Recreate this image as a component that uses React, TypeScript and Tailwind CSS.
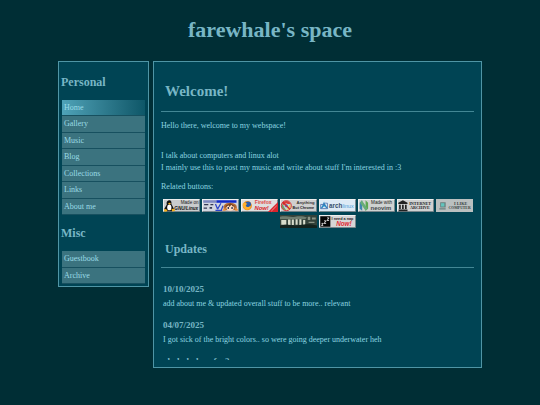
import type { ReactNode } from "react";

const personalLinks = ["Home", "Gallery", "Music", "Blog", "Collections", "Links", "About me"];
const miscLinks = ["Guestbook", "Archive"];

const updates = [
  { title: "10/10/2025", text: "add about me & updated overall stuff to be more.. relevant" },
  { title: "04/07/2025", text: "I got sick of the bright colors.. so were going deeper underwater heh" },
];

const NavGroup = ({ title, links, height }: { title: string; links: string[]; height: string }) => {
  return (
    <div>
      <h2 className="py-[11px] text-[12px] leading-[14px] font-bold">{title}</h2>
      <ul className={`grid auto-rows-fr px-px ${height}`}>
        {links.map((link) => (
          <li key={link} className="flex border-b border-[#17505f]">
            <a
              href="#"
              className={`flex-1 px-[2px] text-[8px] leading-[15px] text-[#9adbe6] ${
                link === "Home" ? "bg-linear-to-r from-[#4fa3b8] to-[#0d5768]" : "bg-[#3b737f]"
              }`}
            >
              {link}
            </a>
          </li>
        ))}
      </ul>
    </div>
  );
};

const Badge = ({ label, children }: { label: string; children: ReactNode }) => {
  return (
    <a href="#" aria-label={label} className="block h-[13px] w-[37px]">
      <svg viewBox="0 0 88 31" preserveAspectRatio="none" className="block h-full w-full font-['Liberation_Sans'] font-bold">
        {children}
      </svg>
    </a>
  );
};

const Frame = ({ fill }: { fill: string }) => (
  <>
    <rect width="88" height="31" fill="#f2f2f2" />
    <path d="M88 0V31H0L3 28H85V3Z" fill="#66777c" />
    <rect x="2" y="2" width="84" height="27" fill={fill} />
  </>
);

const Badges = () => {
  return (
    <div className="flex flex-wrap justify-center gap-x-[2px] gap-y-[3px]">
      <Badge label="Made on GNU/Linux">
        <Frame fill="#c9cccc" />
        <path d="M12 4c6-3 9 2 8 8l6 11-4 6H7l-4-5 6-11c-1-5 0-8 3-9Z" fill="#111" />
        <ellipse cx="15" cy="20" rx="5" ry="7" fill="#fff" />
        <path d="m12 10 4-1 3 2-4 3Z" fill="#f5b21b" />
        <path d="m4 23 7 3-2 4H2Zm16 1 6-1 3 5-7 2Z" fill="#f5b21b" />
        <text x="42" y="13" fontSize="11" fill="#222" fontWeight="400">Made on</text>
        <text x="27" y="26" fontSize="11" fontStyle="italic" fill="#111">GNU/Linux</text>
      </Badge>
      <Badge label="Anime button">
        <Frame fill="#d2d5df" />
        <rect x="34" y="3" width="48" height="6" fill="#1029c8" />
        <rect x="3" y="3" width="31" height="6" fill="#7e88c0" />
        <path d="M5 12h10v3H5zm15 0h7v3h-7zM4 20h8v3H4zm14-1h6v4h-6z" fill="#343954" />
        <path d="m32 12 5 12m8-14-8 14m13-8-4 10m-14 1h16" stroke="#2d45c8" strokeWidth="3" />
        <path d="M53 27c-5-10 0-18 14-18s19 9 14 18Z" fill="#b46b36" />
        <ellipse cx="67" cy="21" rx="9" ry="7" fill="#ffdec4" />
        <path d="m56 16 11-6 12 7-6 1-3-4-5 5-2-4-7 5Z" fill="#73401f" />
        <path d="M61 19h3v5h-3zm9 0h3v5h-3z" fill="#20294c" />
        <path d="m50 25 6-4v7h-7Zm29-4 6 3v4h-6Z" fill="#eb8e3a" />
      </Badge>
      <Badge label="Firefox Now!">
        <Frame fill="#dedede" />
        <circle cx="15" cy="16" r="11" fill="#ed8e20" />
        <circle cx="17" cy="13" r="7" fill="#285cae" />
        <path d="M5 11c4-4 6 0 10 0l-4 5c3 5 8 4 13-1-1 14-20 15-20-4Z" fill="#ffb02c" />
        <path d="m64 31 24-24v24Z" fill="#d8252d" />
        <path d="m72 29 13-13" stroke="#f3a0a0" strokeWidth="2" />
        <text x="33" y="13" fontSize="12" fill="#df4848">Firefox</text>
        <text x="32" y="27" fontSize="14" fontStyle="italic" fill="#d9212b">Now!</text>
      </Badge>
      <Badge label="Anything But Chrome">
        <Frame fill="#cfcfcf" />
        <path d="M15 5a11 11 0 0 1 10 7H14l-3 6-6-8c2-3 6-5 10-5Z" fill="#d93f39" />
        <path d="m5 11 7 12 3 4C4 27 2 17 5 11Z" fill="#6d9b66" />
        <path d="M25 12c2 8-2 14-10 15l6-12Z" fill="#e8cf6a" />
        <circle cx="15" cy="16" r="5" fill="#e9e9e9" />
        <circle cx="15" cy="16" r="4" fill="#577fba" />
        <circle cx="15" cy="16" r="12" fill="none" stroke="#d42028" strokeWidth="2" />
        <path d="m7 8 16 16" stroke="#d42028" strokeWidth="3" />
        <text x="39" y="13" fontSize="10" fill="#333">Anything</text>
        <text x="30" y="25" fontSize="9" fill="#222">But Chrome</text>
      </Badge>
      <Badge label="Arch Linux">
        <Frame fill="#dceaf5" />
        <path d="M12 6c2 6 6 12 10 17l-6-2c-1-4-6-4-7 0l-6 3C7 18 10 12 12 6Z" fill="#2688c4" />
        <path d="M4 13h8l3-3h5v13H4Z" fill="none" stroke="#4b6fae" strokeWidth="2" />
        <text x="24" y="21" fontSize="15" fill="#354d69">arch</text>
        <text x="56" y="21" fontSize="13" fill="#4aa0d8" fontWeight="400">linux</text>
      </Badge>
      <Badge label="Made with Neovim">
        <Frame fill="#cfd2d1" />
        <path d="m4 9 6-6v25l-6-5Z" fill="#3f86b0" />
        <path d="m18 3 6 6v14l-6 5Z" fill="#5da851" />
        <path d="m9 3 14 20-5 5L5 9Z" fill="#67ad78" />
        <text x="31" y="12" fontSize="11" fill="#222" fontWeight="400">Made with</text>
        <text x="30" y="26" fontSize="14" fill="#42484b">neovim</text>
      </Badge>
      <Badge label="Internet Archive">
        <Frame fill="#cfd1d1" />
        <path d="M3 9 14 3l11 6v3H3Zm1 16h21v4H4Zm1-11h4v10H5Zm7 0h4v10h-4Zm7 0h4v10h-4Z" fill="#222" />
        <text x="29" y="14" fontSize="10" fill="#222" className="font-['Liberation_Serif']">INTERNET</text>
        <text x="31" y="25" fontSize="10" fill="#222" className="font-['Liberation_Serif']">ARCHIVE</text>
      </Badge>
      <Badge label="I like computer">
        <rect width="88" height="31" fill="#bac0c0" />
        <path d="M10 8h13v12H10Zm-2 14h15v3H8Z" fill="#687f7d" />
        <path d="M12 10h8v8h-8Z" fill="#62c5bd" />
        <text x="43" y="14" fontSize="10" fill="#364040" className="font-['Liberation_Serif']">I LIKE</text>
        <text x="30" y="25" fontSize="9" fill="#364040" className="font-['Liberation_Serif']">COMPUTER</text>
      </Badge>
      <Badge label="Landscape">
        <rect width="88" height="31" fill="#33423a" />
        <path d="M0 4c14-3 24 2 36 0s20-1 28 2l-4 4H0Z" fill="#6f7d70" />
        <path d="M3 12h12v11H3Zm16-1h6v13h-6Zm9 0h5v13h-5Zm9-1h5v13h-5Zm9 0h5v14h-5Zm9 2h5v12h-5Z" fill="#d8dccb" />
        <path d="M66 4h6v8h-6Zm10 2h9v5h-9Zm-8 10h14v3H68Z" fill="#8b9587" />
        <path d="M0 25c18-5 29 2 46-1s26-3 42 1v6H0Z" fill="#14231e" />
      </Badge>
      <Badge label="I need a nap Now!">
        <Frame fill="#d6d6d6" />
        <rect x="3" y="3" width="24" height="25" fill="#050505" />
        <path d="M6 20h4l-4 5h4m2-11h5l-5 6h5m2-13h5l-5 6h5" fill="none" stroke="#eee" strokeWidth="2" />
        <text x="30" y="12" fontSize="9" fill="#222">I need a nap</text>
        <text x="41" y="26" fontSize="15" fontStyle="italic" fill="#e12b32">Now!</text>
      </Badge>
    </div>
  );
};

export default function App() {
  return (
    <div className="min-h-screen bg-[#002e35] px-4 pb-9 font-['Liberation_Serif',serif] text-[#78b6c5]">
      <header className="pt-4 pb-[17px] text-center">
        <h1 className="text-[22px] leading-7 font-bold">farewhale's space</h1>
      </header>
      <div className="mx-auto flex w-full max-w-[424px] items-start gap-1">
        <nav className="w-[91px] shrink-0 border border-[#4f95a5] bg-[#004454] p-[2px]">
          <NavGroup title="Personal" links={personalLinks} height="h-[115px]" />
          <NavGroup title="Misc" links={miscLinks} height="h-[33px]" />
        </nav>
        <main className="min-w-0 flex-1 border border-[#4f95a5] bg-[#004454] px-[7px] pb-[7px]">
          <h2 className="border-b border-[#438795] px-1 pt-5 pb-[11px] text-[15px] leading-[18px] font-bold">Welcome!</h2>
          <div className="pt-2 text-[8px] leading-[12px] text-[#8bd5e0]">
            <p>Hello there, welcome to my webspace!</p>
            <p className="pt-[18px]">
              I talk about computers and linux alot
              <br />
              I mainly use this to post my music and write about stuff I'm interested in :3
            </p>
            <p className="pt-[7px] pb-[6px]">Related buttons:</p>
          </div>
          <Badges />
          <h2 className="border-b border-[#438795] px-1 pt-[14px] pb-[11px] text-[12px] leading-[14px] font-bold">Updates</h2>
          <div className="h-[92px] overflow-y-auto px-[2px] pt-[15px] [scrollbar-width:none]">
            {updates.map((update) => (
              <article key={update.title} className="pb-[9px]">
                <h3 className="text-[9px] leading-3 font-bold">{update.title}</h3>
                <p className="pt-[3px] text-[8px] leading-3 text-[#8bd5e0]">{update.text}</p>
              </article>
            ))}
            <h3 className="text-[9px] leading-3 font-bold">ahahahah so far?</h3>
          </div>
        </main>
      </div>
    </div>
  );
}
